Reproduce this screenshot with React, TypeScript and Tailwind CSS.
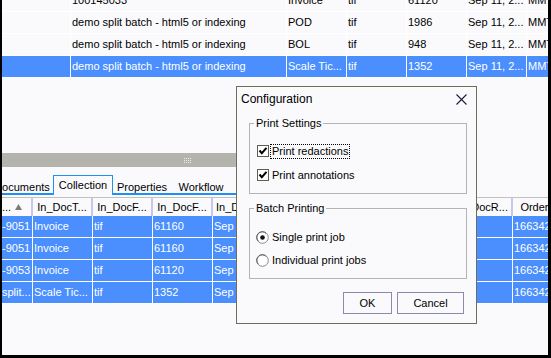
import React from "react";

const topRows = [
  { cells: ["", "100145033", "Invoice", "tif", "61120", "Sep 11, 2...", "MMTest"], selected: false },
  { cells: ["", "demo split batch - html5 or indexing", "POD", "tif", "1986", "Sep 11, 2...", "MMTest"], selected: false },
  { cells: ["", "demo split batch - html5 or indexing", "BOL", "tif", "948", "Sep 11, 2...", "MMTest"], selected: false },
  { cells: ["", "demo split batch - html5 or indexing", "Scale Tic...", "tif", "1352", "Sep 11, 2...", "MMTest"], selected: true },
];

const topWidths = ["w-[69px]", "w-[216px]", "w-[60px]", "w-[60px]", "w-[60px]", "w-[60px]", "w-[60px]"];

const headers = ["In_DocT...", "In_DocF...", "In_DocF...", "In_DocD...", "In_DocN...", "In_DocP...", "In_DocS...", "In_DocR..."];

const bottomRows = [
  ["-9051", "Invoice", "tif", "61160", "Sep 11, 2...", "Accepted", "", "", "", "1663420"],
  ["-9051", "Invoice", "tif", "61160", "Sep 11, 2...", "Accepted", "", "", "", "1663420"],
  ["-9053", "Invoice", "tif", "61120", "Sep 11, 2...", "Accepted", "", "", "", "1663420"],
  ["split...", "Scale Tic...", "tif", "1352", "Sep 11, 2...", "Accepted", "", "", "", "1663420"],
];

const tabs = [
  { label: "Documents", w: "w-[62px]" },
  { label: "Collection", w: "w-[60px]", active: true },
  { label: "Properties", w: "w-[58px]" },
  { label: "Workflow", w: "w-[60px]" },
  { label: "History", w: "w-[56px]" },
];

const Check = () => (
  <div className="w-[12px] h-[12px] border border-[#5e5e4c] bg-white flex items-center justify-center shrink-0">
    <svg width="10" height="10" viewBox="0 0 10 10">
      <polyline points="1.5,4.5 3.8,7.2 8.5,1.8" fill="none" stroke="#000" strokeWidth="2" />
    </svg>
  </div>
);

const Radio = ({ on }: { on?: boolean }) => (
  <svg width="13" height="13" viewBox="0 0 13 13" className="shrink-0">
    <circle cx="6.5" cy="6.5" r="5.8" fill="#fff" stroke="#8a8a8a" strokeWidth="1" />
    <path d="M2.4 10.2 A5.2 5.2 0 0 1 10.2 2.4" fill="none" stroke="#5a5a5a" strokeWidth="1" />
    {on && <circle cx="6.5" cy="6.5" r="2.3" fill="#111" />}
  </svg>
);

export default function App() {
  return (
    <div className="w-[551px] h-[358px] overflow-hidden bg-black">
      <div className="ml-[2px] w-[546px] h-[355px] bg-[#fafafc] overflow-hidden relative flex flex-col font-['Liberation_Sans',Arial,sans-serif] text-[11px] leading-[13px] text-black">
        {/* Top table */}
        <div className="-mt-[10px] flex flex-col shrink-0">
          {topRows.map((row, i) => (
            <div
              key={i}
              className={`flex h-[22px] border-b border-white ${row.selected ? "bg-[#4a8ffd] text-white" : ""}`}
            >
              {row.cells.map((c, j) => (
                <div
                  key={j}
                  className={`${topWidths[j]} shrink-0 border-r border-white pl-[1px] flex items-center whitespace-nowrap overflow-hidden`}
                >
                  {c}
                </div>
              ))}
            </div>
          ))}
        </div>

        <div className="h-[75px] shrink-0" />

        {/* Splitter */}
        <div className="w-[370px] h-[14px] shrink-0 bg-[#b4b4ac] flex items-center justify-center">
          <svg width="7" height="5" viewBox="0 0 7 5">
            {[0, 2, 4, 6].map((x) =>
              [0, 2, 4].map((y) => <rect key={`${x}-${y}`} x={x} y={y} width="1" height="1" fill="#ececec" />)
            )}
          </svg>
        </div>

        {/* Tabs */}
        <div className="w-[370px] h-[28px] shrink-0 border-b-2 border-[#1e8ff5] flex items-end">
          <div className="flex items-end -ml-[11px]">
            {tabs.map((t) =>
              t.active ? (
                <div
                  key={t.label}
                  className={`${t.w} h-[20px] -mb-[2px] border-t border-l border-r border-[#1e8ff5] bg-[#fafafc] pt-[3px] text-center whitespace-nowrap`}
                >
                  {t.label}
                </div>
              ) : (
                <div key={t.label} className={`${t.w} h-[18px] pt-[6px] text-center whitespace-nowrap`}>
                  {t.label}
                </div>
              )
            )}
          </div>
        </div>

        {/* Bottom table header */}
        <div className="mt-[2px] h-[19px] shrink-0 border-t border-[#c2c2ba] flex whitespace-nowrap">
          <div className="w-[31px] shrink-0 border-r-2 border-[#c6c6ee] flex items-center overflow-hidden">
            <span>...</span>
            <svg width="7" height="6" viewBox="0 0 7 6" className="ml-[4px] shrink-0">
              <polygon points="3.5,0 7,6 0,6" fill="#7c7c7c" />
            </svg>
          </div>
          {headers.map((h, i) => (
            <div
              key={i}
              className="w-[60px] shrink-0 border-r-2 border-[#c6c6ee] flex items-center justify-center overflow-hidden"
            >
              {h}
            </div>
          ))}
          <div className="w-[60px] shrink-0 flex items-center justify-center overflow-hidden">OrderN...</div>
        </div>

        {/* Bottom table body */}
        <div className="flex flex-col shrink-0">
          {bottomRows.map((r, i) => (
            <div key={i} className="flex h-[22px] border-b border-white bg-[#4a8ffd] text-white whitespace-nowrap">
              <div className="w-[31px] shrink-0 border-r border-white flex items-center overflow-hidden">{r[0]}</div>
              {r.slice(1, 9).map((c, j) => (
                <div key={j} className="w-[60px] shrink-0 border-r border-white pl-[1px] flex items-center overflow-hidden">
                  {c}
                </div>
              ))}
              <div className="w-[60px] shrink-0 pl-[1px] flex items-center overflow-hidden">{r[9]}</div>
            </div>
          ))}
        </div>

        {/* Configuration dialog */}
        <div className="absolute left-[234px] top-[86px] w-[241px] h-[238px] border border-[#6e6e5c] bg-[#fafafc] flex flex-col">
          <div className="h-[24px] shrink-0 flex items-center justify-between pl-[4px] pr-[9px]">
            <span className="text-[12px] leading-[14px]">Configuration</span>
            <svg width="11" height="11" viewBox="0 0 11 11">
              <path d="M0.5 0.5 L10.5 10.5 M10.5 0.5 L0.5 10.5" stroke="#1c1c3c" strokeWidth="1.1" />
            </svg>
          </div>

          <fieldset className="ml-[12px] mr-[9px] mt-[6px] border border-[#b4b4b4] px-0 pt-[13px] pb-[10px]">
            <legend className="ml-[4px] px-[2px] leading-[13px]">Print Settings</legend>
            <div className="pl-[7px] flex flex-col gap-[8px]">
              <div className="h-[16px] flex items-center">
                <Check />
                <span className="ml-[1px] h-[15px] border border-dotted border-black px-[1px] leading-[13px]">
                  Print redactions
                </span>
              </div>
              <div className="h-[16px] flex items-center">
                <Check />
                <span className="ml-[1px] h-[15px] border border-transparent px-[1px] leading-[13px]">
                  Print annotations
                </span>
              </div>
            </div>
          </fieldset>

          <fieldset className="ml-[12px] mr-[9px] mt-[8px] border border-[#b4b4b4] px-0 pt-[14px] pb-[10px]">
            <legend className="ml-[4px] px-[2px] leading-[13px]">Batch Printing</legend>
            <div className="pl-[6px] flex flex-col gap-[7px]">
              <div className="h-[16px] flex items-center">
                <Radio on />
                <span className="ml-[3px]">Single print job</span>
              </div>
              <div className="h-[16px] flex items-center">
                <Radio />
                <span className="ml-[3px]">Individual print jobs</span>
              </div>
            </div>
          </fieldset>

          <div className="mt-[13px] mr-[12px] flex justify-end gap-[5px]">
            <button className="w-[49px] h-[22px] border border-[#8a8aae] bg-[#fafafc] text-[11px] leading-[13px]">OK</button>
            <button className="w-[67px] h-[22px] border border-[#8a8aae] bg-[#fafafc] text-[11px] leading-[13px]">Cancel</button>
          </div>
        </div>
      </div>
    </div>
  );
}
